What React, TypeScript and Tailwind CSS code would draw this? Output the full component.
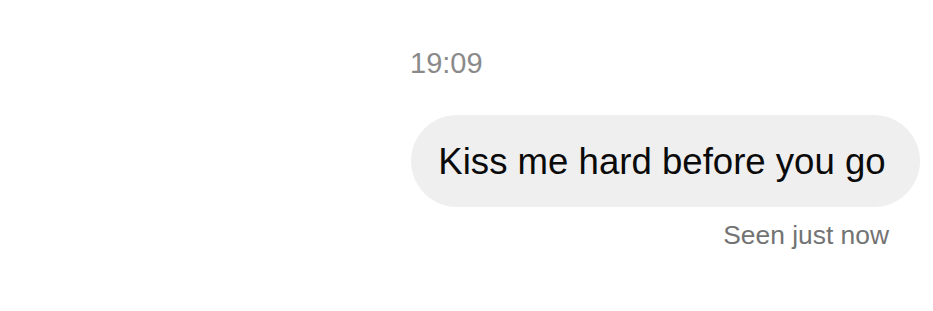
import React from "react";

const App: React.FC = () => {
  return (
    <div
      className="w-[933px] h-[311px] bg-white overflow-hidden"
      style={{ fontFamily: '"Liberation Sans", Arial, sans-serif' }}
    >
      <div className="pt-[46px] pl-[410px] text-[29px] leading-[34px] text-[#8a8a8a]">
        19:09
      </div>
      <div className="flex justify-end pr-[13px] mt-[35px]">
        <div className="h-[92px] w-[509px] rounded-full bg-[#efefef] flex items-center justify-center">
          <span className="text-[36.6px] leading-none text-[#0a0a0a] pt-[2px] pr-[7px]">
            Kiss me hard before you go
          </span>
        </div>
      </div>
      <div className="flex justify-end pr-[44px] mt-[13px]">
        <span className="text-[26.4px] leading-[30px] text-[#737373]">Seen just now</span>
      </div>
    </div>
  );
};

export default App;
